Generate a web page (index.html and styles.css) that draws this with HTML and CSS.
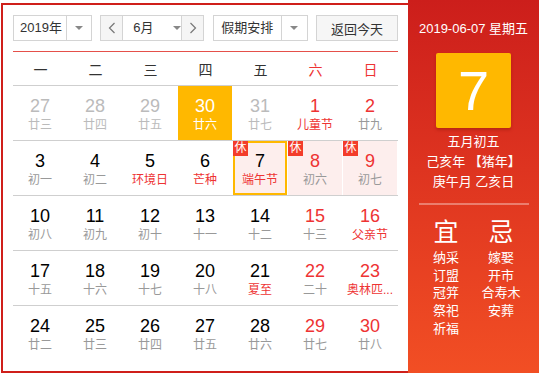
FILE: index.html
```html
<!DOCTYPE html>
<html lang="zh">
<head>
<meta charset="utf-8">
<link rel="stylesheet" href="styles.css">
</head>
<body>
<div class="cal">
  <div class="main">
    <div class="controls">
      <div class="sel sel-year"><span class="val">2019年</span><span class="arr"><i class="tri"></i></span></div>
      <div class="sel sel-month">
        <span class="nav"><svg width="8" height="12" viewBox="0 0 8 12"><path d="M6.5 1 L1.5 6 L6.5 11" fill="none" stroke="#777" stroke-width="1.2"/></svg></span>
        <span class="val mval">6月<i class="tri"></i></span>
        <span class="nav nav-r"><svg width="8" height="12" viewBox="0 0 8 12"><path d="M1.5 1 L6.5 6 L1.5 11" fill="none" stroke="#777" stroke-width="1.2"/></svg></span>
      </div>
      <div class="sel sel-hol"><span class="val">假期安排</span><span class="arr"><i class="tri"></i></span></div>
      <div class="btn">返回今天</div>
    </div>
    <div class="week">
      <span>一</span><span>二</span><span>三</span><span>四</span><span>五</span><span class="red">六</span><span class="red">日</span>
    </div>
    <div class="days">
      <div class="d other"><div class="in"><b>27</b><i>廿三</i></div></div>
      <div class="d other"><div class="in"><b>28</b><i>廿四</i></div></div>
      <div class="d other"><div class="in"><b>29</b><i>廿五</i></div></div>
      <div class="d today"><div class="in"><b>30</b><i>廿六</i></div></div>
      <div class="d other"><div class="in"><b>31</b><i>廿七</i></div></div>
      <div class="d we"><div class="in"><b>1</b><i class="fest">儿童节</i></div></div>
      <div class="d we"><div class="in"><b>2</b><i>廿九</i></div></div>

      <div class="d"><div class="in"><b>3</b><i>初一</i></div></div>
      <div class="d"><div class="in"><b>4</b><i>初二</i></div></div>
      <div class="d"><div class="in"><b>5</b><i class="fest">环境日</i></div></div>
      <div class="d"><div class="in"><b>6</b><i class="fest">芒种</i></div></div>
      <div class="d sel-day rest"><div class="in"><span class="xiu">休</span><b>7</b><i class="fest">端午节</i></div></div>
      <div class="d we rest"><div class="in"><span class="xiu">休</span><b>8</b><i>初六</i></div></div>
      <div class="d we rest"><div class="in"><span class="xiu">休</span><b>9</b><i>初七</i></div></div>

      <div class="d"><div class="in"><b>10</b><i>初八</i></div></div>
      <div class="d"><div class="in"><b>11</b><i>初九</i></div></div>
      <div class="d"><div class="in"><b>12</b><i>初十</i></div></div>
      <div class="d"><div class="in"><b>13</b><i>十一</i></div></div>
      <div class="d"><div class="in"><b>14</b><i>十二</i></div></div>
      <div class="d we"><div class="in"><b>15</b><i>十三</i></div></div>
      <div class="d we"><div class="in"><b>16</b><i class="fest">父亲节</i></div></div>

      <div class="d"><div class="in"><b>17</b><i>十五</i></div></div>
      <div class="d"><div class="in"><b>18</b><i>十六</i></div></div>
      <div class="d"><div class="in"><b>19</b><i>十七</i></div></div>
      <div class="d"><div class="in"><b>20</b><i>十八</i></div></div>
      <div class="d"><div class="in"><b>21</b><i class="fest">夏至</i></div></div>
      <div class="d we"><div class="in"><b>22</b><i>二十</i></div></div>
      <div class="d we"><div class="in"><b>23</b><i class="fest">奥林匹...</i></div></div>

      <div class="d last"><div class="in"><b>24</b><i>廿二</i></div></div>
      <div class="d last"><div class="in"><b>25</b><i>廿三</i></div></div>
      <div class="d last"><div class="in"><b>26</b><i>廿四</i></div></div>
      <div class="d last"><div class="in"><b>27</b><i>廿五</i></div></div>
      <div class="d last"><div class="in"><b>28</b><i>廿六</i></div></div>
      <div class="d last we"><div class="in"><b>29</b><i>廿七</i></div></div>
      <div class="d last we"><div class="in"><b>30</b><i>廿八</i></div></div>
    </div>
  </div>
  <div class="side">
    <div class="date">2019-06-07 星期五</div>
    <div class="big">7</div>
    <div class="lunar">
      <div>五月初五</div>
      <div>己亥年 【猪年】</div>
      <div>庚午月 乙亥日</div>
    </div>
    <div class="sep"></div>
    <div class="yj">
      <div class="col">
        <div class="h">宜</div>
        <div>纳采</div><div>订盟</div><div>冠笄</div><div>祭祀</div><div>祈福</div>
      </div>
      <div class="col">
        <div class="h">忌</div>
        <div>嫁娶</div><div>开市</div><div>合寿木</div><div>安葬</div>
      </div>
    </div>
  </div>
</div>
</body>
</html>
```

FILE: styles.css
```css
html, body {
  margin: 0;
  padding: 0;
  background: #fff;
  overflow: hidden;
}
body {
  font-family: "Liberation Sans", "Noto Sans CJK SC", sans-serif;
  color: #333;
}
.cal {
  display: flex;
  margin: 3px 0 0 1px;
  width: 536px;
  height: 366px;
  border: 2px solid #cf1f1a;
  border-right: none;
}
.main {
  width: 385px;
  padding: 10px 10px 0 10px;
  flex: none;
}
.controls {
  display: flex;
  justify-content: space-between;
  height: 26px;
  font-size: 13px;
}
.sel, .btn {
  box-sizing: border-box;
  height: 26px;
  border: 1px solid #d4d4d4;
  display: flex;
  align-items: center;
  background: #fff;
}
.sel-year { width: 79px; }
.sel-month { width: 104px; }
.sel-hol { width: 95px; }
.btn {
  width: 82px;
  justify-content: center;
  background: #f6f6f6;
  color: #333;
}
.val {
  flex: 1;
  text-align: center;
  line-height: 24px;
}
.sel-year .val { padding-left: 2px; }
.arr {
  width: 24px;
  height: 24px;
  border-left: 1px solid #d4d4d4;
  display: flex;
  align-items: center;
  justify-content: center;
}
.sel-hol .arr { width: 25px; }
.tri {
  display: inline-block;
  width: 0;
  height: 0;
  border-left: 4px solid transparent;
  border-right: 4px solid transparent;
  border-top: 4px solid #888;
}
.nav {
  width: 21px;
  height: 24px;
  background: #f5f5f5;
  display: flex;
  align-items: center;
  justify-content: center;
  border-right: 1px solid #d4d4d4;
}
.nav-r {
  border-right: none;
  border-left: 1px solid #d4d4d4;
}
.mval {
  display: flex;
  align-items: center;
  justify-content: flex-start;
  padding-left: 10px;
  gap: 0;
}
.mval .tri { margin-left: 19px; }
.week {
  margin-top: 10px;
  border-top: 1px solid #e5504a;
  border-bottom: 1px solid #cfcfcf;
  height: 33px;
  display: grid;
  grid-template-columns: repeat(7, 55px);
  align-items: center;
  font-size: 14px;
  color: #333;
}
.week span { text-align: center; }
.week .red { color: #e33; }
.days {
  display: grid;
  grid-template-columns: repeat(7, 55px);
}
.d {
  height: 54px;
  border-bottom: 1px solid #cfcfcf;
}
.d.last { border-bottom: none; }
.in {
  position: relative;
  box-sizing: border-box;
  width: 54px;
  height: 54px;
  padding-top: 9px;
  text-align: center;
}
.in b {
  display: block;
  font-weight: normal;
  font-size: 18px;
  line-height: 22px;
  color: #000;
}
.in i {
  display: block;
  font-style: normal;
  font-size: 12px;
  line-height: 16px;
  color: #999;
  white-space: nowrap;
}
.we .in b { color: #e33; }
.in i.fest { color: #e33; }
.other .in b { color: #bbb; }
.other .in i { color: #bbb; }
.today .in { background: #ffb800; }
.today .in b, .today .in i { color: #fff; }
.rest .in { background: #fdeeed; }
.sel-day .in {
  border: 2px solid #ffb800;
  padding-top: 7px;
}
.xiu {
  position: absolute;
  left: 0;
  top: 0;
  width: 15px;
  height: 15px;
  background: #f33c2b;
  color: #fff;
  font-size: 12px;
  line-height: 15px;
  text-align: center;
}
.sel-day .xiu { left: -2px; top: -2px; }
.side {
  width: 131px;
  flex: none;
  margin-top: -5px;
  margin-bottom: -5px;
  background: linear-gradient(to bottom, #cc1e1b 0%, #de3420 45%, #f24f24 100%);
  color: #fff;
  text-align: center;
  padding-top: 20px;
  box-sizing: border-box;
}
.date {
  font-size: 13px;
  line-height: 18px;
}
.big {
  width: 75px;
  height: 75px;
  margin: 15px auto 0;
  background: #ffb800;
  border-radius: 2px;
  box-shadow: 0 2px 3px rgba(120, 20, 0, 0.35);
  font-size: 56px;
  line-height: 75px;
  color: #fff;
}
.lunar {
  margin-top: 4px;
  font-size: 13px;
  line-height: 20px;
}
.sep {
  width: 110px;
  height: 2px;
  margin: 11px auto 0;
  background: rgba(255, 255, 255, 0.35);
}
.yj {
  display: flex;
  justify-content: center;
  margin-top: 12px;
  font-size: 13px;
  line-height: 17.7px;
}
.col { width: 55px; }
.col .h {
  font-size: 25px;
  line-height: 30px;
  margin-bottom: 2px;
}
```
